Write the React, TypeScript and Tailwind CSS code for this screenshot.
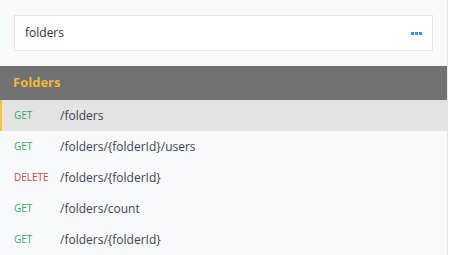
import React from "react";

const rows = [
  { m: "GET", p: "/folders", sel: true },
  { m: "GET", p: "/folders/{folderId}/users" },
  { m: "DELETE", p: "/folders/{folderId}" },
  { m: "GET", p: "/folders/count" },
  { m: "GET", p: "/folders/{folderId}" },
];

export default function App() {
  return (
    <div
      className="w-[450px] h-[255px] bg-white overflow-hidden flex"
      style={{ fontFamily: '"Open Sans", sans-serif' }}
    >
      <div className="w-[448px] h-full bg-[#f8f9fb] border-r border-[#e3e4e6] flex flex-col">
        <div className="pt-[15px] pb-[15px] pl-[14px] pr-[14px]">
          <div className="h-[36px] bg-white border border-[#e1e3e6] flex items-center justify-between pl-[10px] pr-[10px]">
            <span className="text-[12px] text-[#333]">folders</span>
            <span className="flex gap-[1px]">
              <span className="w-[3px] h-[3px] bg-[#3b8fea]" />
              <span className="w-[3px] h-[3px] bg-[#3b8fea]" />
              <span className="w-[3px] h-[3px] bg-[#3b8fea]" />
            </span>
          </div>
        </div>
        <div className="h-[34px] bg-[#727272] flex items-center pl-[13px]">
          <span className="text-[13px] font-bold text-[#f1b83a]">Folders</span>
        </div>
        {rows.map((r, i) => (
          <div
            key={i}
            className={
              "h-[31px] flex items-center " +
              (r.sel ? "bg-[#e3e3e3] border-l-2 border-[#f3c33c] pl-[12px]" : "pl-[14px]")
            }
          >
            <span
              className={
                "w-[46px] text-[10px] " +
                (r.m === "DELETE" ? "text-[#d0463f]" : "text-[#3aaa63]")
              }
            >
              {r.m}
            </span>
            <span className="text-[12px] text-[#3e4350]">{r.p}</span>
          </div>
        ))}
      </div>
    </div>
  );
}
